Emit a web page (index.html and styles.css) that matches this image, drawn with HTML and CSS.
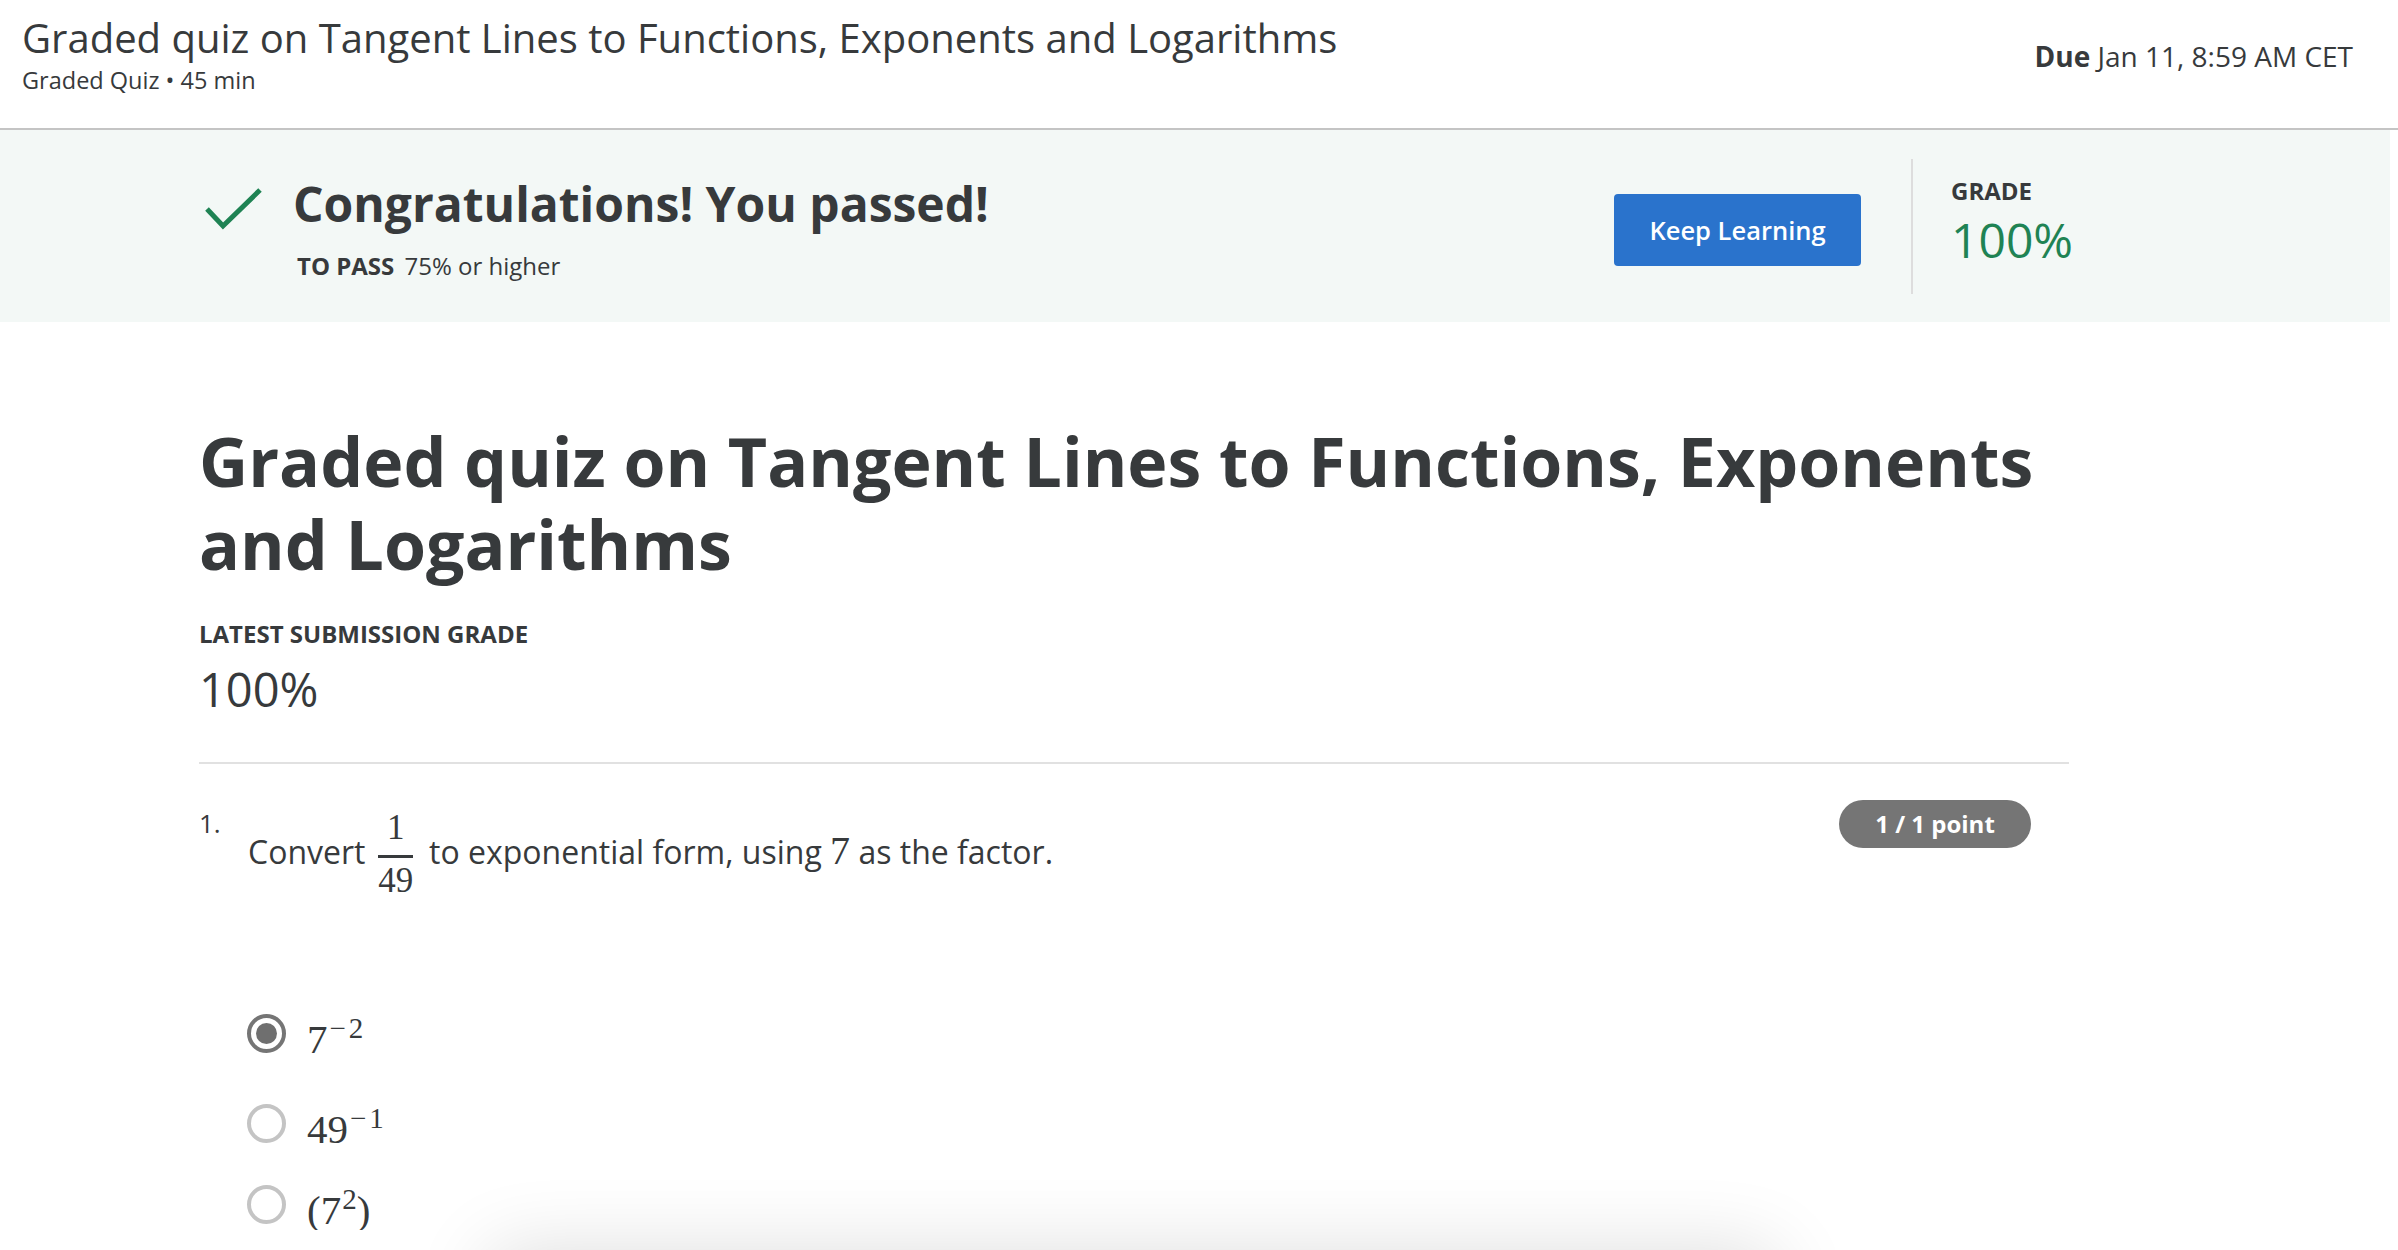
FILE: index.html
```html
<!DOCTYPE html>
<html lang="en">
<head>
<meta charset="utf-8">
<title>Graded quiz on Tangent Lines to Functions, Exponents and Logarithms</title>
<link rel="stylesheet" href="styles.css">
</head>
<body>
<header class="topbar">
  <div class="topbar-left">
    <h1 class="topbar-title">Graded quiz on Tangent Lines to Functions, Exponents and Logarithms</h1>
    <div class="topbar-meta">Graded Quiz • 45 min</div>
  </div>
  <div class="due"><strong>Due</strong> Jan 11, 8:59 AM CET</div>
</header>

<section class="result-band">
  <div class="result-inner">
    <div class="pass">
      <svg class="check" width="60" height="44" viewBox="0 0 60 44" aria-hidden="true">
        <polyline points="5,21 21,38 58,2" fill="none" stroke="#1f8354" stroke-width="5"/>
      </svg>
      <div class="pass-text">
        <div class="pass-title">Congratulations! You passed!</div>
        <div class="pass-req"><strong>TO PASS</strong> 75% or higher</div>
      </div>
    </div>
    <button class="keep">Keep Learning</button>
    <div class="vdivider"></div>
    <div class="grade-col">
      <div class="grade-label">GRADE</div>
      <div class="grade-value">100%</div>
    </div>
  </div>
</section>

<main class="content">
  <h2 class="quiz-title">Graded quiz on Tangent Lines to Functions, Exponents and Logarithms</h2>
  <div class="latest-label">LATEST SUBMISSION GRADE</div>
  <div class="latest-value">100%</div>
  <div class="hdivider"></div>

  <div class="question">
    <div class="q-num">1.</div>
    <div class="q-body">
      <div class="prompt">Convert <span class="frac"><span class="num">1</span><span class="bar"></span><span class="den">49</span></span> to exponential form, using <span class="math">7</span> as the factor.</div>
      <div class="options">
        <div class="option">
          <span class="radio selected"></span>
          <span class="opt-math">7<span class="sup"><span class="minus">−</span>2</span></span>
        </div>
        <div class="option">
          <span class="radio"></span>
          <span class="opt-math">49<span class="sup"><span class="minus">−</span>1</span></span>
        </div>
        <div class="option option-last">
          <span class="radio"></span>
          <span class="opt-math">(7<span class="sup">2</span>)</span>
        </div>
      </div>
    </div>
    <div class="badge">1 / 1 point</div>
  </div>
</main>

<div class="footer-shadow"></div>
</body>
</html>
```

FILE: styles.css
```css
html, body {
  margin: 0;
  padding: 0;
  background: #ffffff;
}

body {
  font-family: "Open Sans", "Noto Sans", sans-serif;
  color: #373a3c;
  overflow: hidden;
}

/* ---------- top bar ---------- */
.topbar {
  box-sizing: border-box;
  height: 130px;
  padding: 14px 45px 0 22px;
  border-bottom: 2px solid #c4c4c4;
  display: flex;
  justify-content: space-between;
  align-items: flex-start;
}

.topbar-title {
  margin: 0;
  font-size: 40px;
  line-height: 48px;
  font-weight: 400;
  color: #373a3c;
}

.topbar-meta {
  margin-top: 4px;
  font-size: 23.5px;
  line-height: 28px;
}

.due {
  margin-top: 24px;
  font-size: 28px;
  line-height: 36px;
  white-space: nowrap;
}

.due strong {
  font-weight: 700;
}

/* ---------- result band ---------- */
.result-band {
  width: 2390px;
  height: 192px;
  background: #f3f8f6;
  display: flex;
  align-items: center;
}

.result-inner {
  margin-left: 199px;
  width: 1870px;
  display: flex;
  align-items: center;
}

.pass {
  flex: 1;
  display: flex;
  align-items: flex-start;
  margin-top: 5.5px;
}

.check {
  margin-left: 3px;
  margin-top: 12px;
  margin-right: 31px;
  flex: none;
}

.pass-title {
  font-size: 48px;
  line-height: 56px;
  font-weight: 700;
}

.pass-req {
  margin-top: 19px;
  margin-left: 4px;
  font-size: 24px;
  line-height: 30px;
}

.pass-req strong {
  font-weight: 700;
  margin-right: 4px;
}

.keep {
  flex: none;
  width: 247px;
  height: 72px;
  margin-top: 8px;
  border: none;
  border-radius: 4px;
  background: #2a73cc;
  color: #ffffff;
  font-family: "Open Sans", "Noto Sans", sans-serif;
  font-size: 25.5px;
  font-weight: 600;
  padding: 0;
}

.vdivider {
  flex: none;
  width: 2px;
  height: 135px;
  background: #dddddd;
  margin: 0 38px 0 50px;
}

.grade-col {
  width: 118px;
  white-space: nowrap;
  margin-bottom: 6.6px;
}

.grade-label {
  font-size: 24px;
  line-height: normal;
  font-weight: 700;
}

.grade-value {
  font-size: 48px;
  line-height: normal;
  color: #1f8354;
}

/* ---------- main content ---------- */
.content {
  margin-left: 199px;
  width: 1870px;
}

.quiz-title {
  margin: 97px 0 0 0;
  font-size: 68px;
  line-height: 83px;
  font-weight: 700;
  color: #373a3c;
}

.latest-label {
  margin-top: 33.5px;
  font-size: 24px;
  line-height: 30px;
  font-weight: 700;
}

.latest-value {
  margin-top: 10.5px;
  font-size: 47px;
  line-height: 60px;
}

.hdivider {
  margin-top: 43px;
  height: 2px;
  background: #e1e1e1;
}

.question {
  margin-top: 36px;
  display: flex;
  align-items: flex-start;
}

.q-num {
  flex: none;
  width: 49px;
  padding-top: 6px;
  font-size: 26px;
  line-height: 34px;
}

.q-body {
  flex: 1;
}

.prompt {
  padding-top: 11px;
  font-size: 32px;
  line-height: 42px;
}

.frac {
  display: inline-block;
  vertical-align: -28px;
  text-align: center;
  font-family: "Liberation Serif", "Times New Roman", serif;
  font-size: 35px;
  margin: 0 6px 0 3px;
  padding: 0 1.5px;
}

.frac .num {
  display: block;
  line-height: 34px;
  padding-bottom: 9.8px;
}

.frac .bar {
  display: block;
  height: 3px;
  background: #373a3c;
}

.frac .den {
  display: block;
  line-height: 34px;
  padding-top: 6.2px;
}

.math {
  font-family: "Liberation Serif", "Times New Roman", serif;
  font-size: 40px;
}

.options {
  margin-top: 111px;
  display: flex;
  flex-direction: column;
}

.option {
  height: 50px;
  display: flex;
  align-items: center;
}

.option + .option {
  margin-top: 40px;
}

.option.option-last {
  margin-top: 31px;
}

.radio {
  flex: none;
  box-sizing: border-box;
  width: 39px;
  height: 39px;
  border-radius: 50%;
  border: 4px solid #c4c4c4;
  display: flex;
  align-items: center;
  justify-content: center;
  margin-left: -1px;
}

.radio.selected {
  border-color: #757575;
}

.radio.selected::after {
  content: "";
  width: 21px;
  height: 21px;
  border-radius: 50%;
  background: #6f6f6f;
}

.opt-math {
  margin-left: 21px;
  font-family: "Liberation Serif", "Times New Roman", serif;
  font-size: 41px;
  line-height: 40px;
  color: #373a3c;
}

.opt-math .sup {
  font-size: 29px;
  vertical-align: 15px;
  margin-left: 1px;
}

.opt-math .minus {
  padding: 0 3px 0 1px;
}

.badge {
  flex: none;
  box-sizing: border-box;
  width: 192px;
  height: 48px;
  margin-right: 38px;
  border-radius: 24px;
  background: #757575;
  color: #ffffff;
  font-size: 24px;
  font-weight: 700;
  line-height: 48px;
  text-align: center;
}

/* floating bar just below the viewport: only its shadow shows */
.footer-shadow {
  position: fixed;
  left: 490px;
  top: 1252px;
  width: 1285px;
  height: 100px;
  border-radius: 12px;
  background: #ffffff;
  box-shadow: 0 0 80px rgba(0, 0, 0, 0.14);
}
```
